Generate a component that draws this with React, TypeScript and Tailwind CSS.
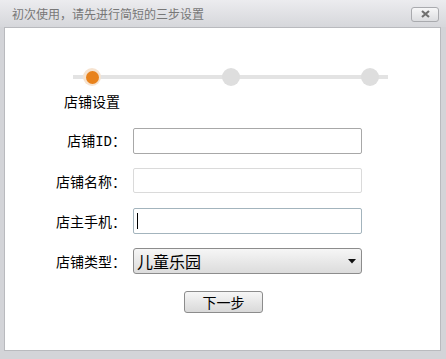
const font = { fontFamily: '"Noto Sans CJK SC", "Liberation Sans", sans-serif' };

function Step({ left, active }: { left: string; active?: boolean }) {
    if (active) {
        return (
            <div className={`absolute top-0 ${left} w-[18px] h-[18px] rounded-full bg-[#f6e3d0] flex items-center justify-center`}>
                <div className="w-[13px] h-[13px] rounded-full bg-[#e8821c]" />
            </div>
        );
    }
    return <div className={`absolute top-0 ${left} w-[18px] h-[18px] rounded-full bg-[#dedede]`} />;
}

function Row({ label, children }: { label: React.ReactNode; children: React.ReactNode }) {
    return (
        <div className="flex items-center h-[26px]">
            <div className="w-[121px] text-right text-[14px] text-black leading-none">{label}</div>
            <div className="ml-[7px] w-[229px] h-full">{children}</div>
        </div>
    );
}

export default function App() {
    return (
        <div className="w-[446px] h-[359px] flex flex-col bg-[#d3d4d8]" style={font}>
            <div className="h-[27px] flex items-center justify-between pl-[12px] pr-[7px] bg-gradient-to-b from-[#ececef] to-[#d6d7db]">
                <span className="text-[12px] text-[#777] leading-none">初次使用，请先进行简短的三步设置</span>
                <button className="w-[28px] h-[15px] mt-[1px] rounded-[3px] border border-[#a9aaae] bg-gradient-to-b from-[#f7f7f8] to-[#dcdde0] flex items-center justify-center">
                    <svg width="9" height="8" viewBox="0 0 9 8">
                        <path d="M1 1 L8 7 M8 1 L1 7" stroke="#707070" strokeWidth="2.2" />
                    </svg>
                </button>
            </div>

            <div className="ml-[4px] mr-[5px] mb-[8px] flex-1 bg-white border border-[#b9babe] flex flex-col">
                <div className="relative ml-[68px] mt-[40px] w-[315px] h-[18px]">
                    <div className="absolute left-0 right-0 top-[7px] h-[4px] bg-[#e3e3e3]" />
                    <Step left="left-[10px]" active />
                    <Step left="left-[149px]" />
                    <Step left="left-[288px]" />
                </div>
                <div className="ml-[59px] mt-[7px] text-[14px] text-black leading-[16px]">店铺设置</div>

                <div className="mt-[19px] flex flex-col gap-[14px]">
                    <Row label={<>店铺<span style={{ fontFamily: '"Liberation Mono", monospace' }}>ID</span>：</>}>
                        <div className="h-full border border-[#a8a8a8] rounded-[2px] bg-white" />
                    </Row>
                    <Row label="店铺名称：">
                        <div className="h-[25px] border border-[#dadada] rounded-[2px] bg-white" />
                    </Row>
                    <Row label="店主手机：">
                        <div className="h-full border border-[#a3b4bd] rounded-[2px] bg-white flex items-center pl-[3px]">
                            <div className="w-[1px] h-[16px] bg-black" />
                        </div>
                    </Row>
                    <Row label="店铺类型：">
                        <div className="h-full border border-[#8c8c8c] rounded-[3px] bg-gradient-to-b from-[#f6f6f6] to-[#dcdcdc] flex items-center justify-between pl-[3px] pr-[5px]">
                            <span className="text-[16px] text-black leading-none">儿童乐园</span>
                            <svg width="8" height="5" viewBox="0 0 8 5">
                                <path d="M0 0 H8 L4 4.5 Z" fill="#111" />
                            </svg>
                        </div>
                    </Row>
                </div>

                <div className="mt-[17px] flex justify-center">
                    <button className="ml-[2px] w-[79px] h-[22px] rounded-[3px] border border-[#8c8c8c] bg-gradient-to-b from-[#f6f6f6] to-[#d9d9d9] text-[14px] text-black leading-none">
                        下一步
                    </button>
                </div>
            </div>
        </div>
    );
}
